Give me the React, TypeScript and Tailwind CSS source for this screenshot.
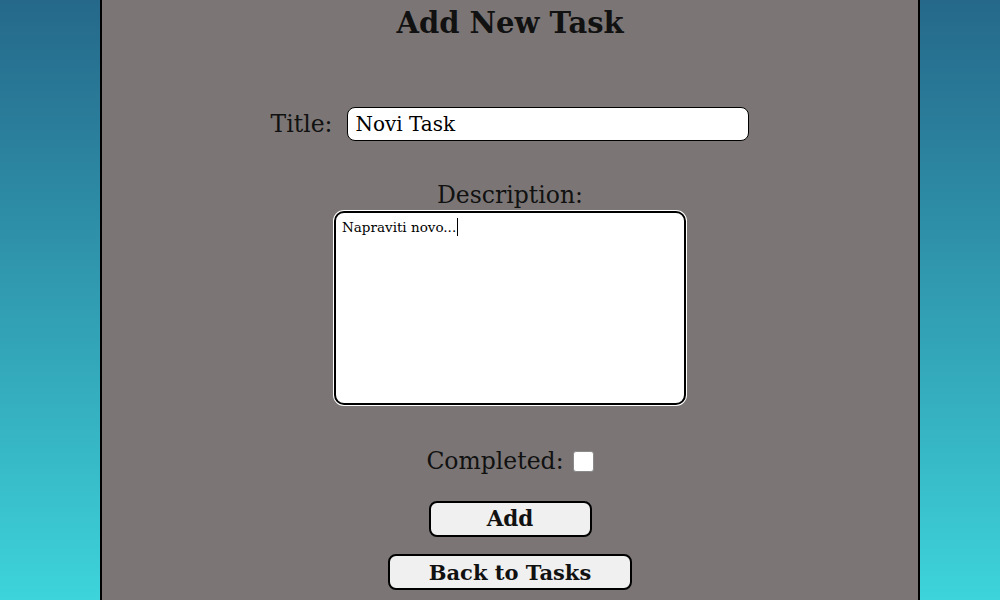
import React from 'react';

const serif = { fontFamily: '"DejaVu Serif", "Liberation Serif", serif' };

export default function App() {
  return (
    <div
      className="h-[600px] w-full overflow-hidden bg-linear-to-b from-[#25688a] to-[#3dd4db] text-[#111]"
      style={serif}
    >
      <div className="ml-[100px] flex h-full w-[820px] flex-col items-center border-x-2 border-black bg-[#7b7675]">
        <h1 className="h-[46px] text-[29px] font-bold leading-[46px]">Add New Task</h1>

        <div className="mt-[61px] flex items-center gap-[15px]">
          <label className="text-[23.5px] leading-[30px]">Title:</label>
          <input
            type="text"
            defaultValue="Novi Task"
            className="h-[34px] w-[402px] rounded-[8px] border border-black bg-white px-[7px] text-[20px] text-black outline-none"
          />
        </div>

        <label className="mt-[39px] text-[23.5px] leading-[30px]">Description:</label>
        <div className="relative mt-[1px]">
          <textarea
            defaultValue="Napraviti novo..."
            className="block h-[194px] w-[352px] resize-none rounded-[10px] border-2 border-black bg-white px-[6px] py-[4px] text-[13.5px] leading-[20px] text-black outline-none ring-1 ring-white"
          />
          {/* caret */}
          <span className="absolute left-[123px] top-[7px] h-[18px] w-px bg-black" />
        </div>

        <div className="mt-[41px] flex items-center gap-[9px]">
          <label className="text-[23.5px] leading-[30px]">Completed:</label>
          <span className="block h-[21px] w-[21px] rounded-[3px] border border-[#8a8a8a] bg-white" />
        </div>

        <button className="mt-[25px] h-[36px] w-[163px] rounded-[8px] border-2 border-black bg-[#f0f0f0] text-[21.5px] font-bold leading-none">
          Add
        </button>
        <button className="mt-[17px] h-[36px] w-[244px] rounded-[8px] border-2 border-black bg-[#f0f0f0] text-[21px] font-bold leading-none">
          Back to Tasks
        </button>
      </div>
    </div>
  );
}
